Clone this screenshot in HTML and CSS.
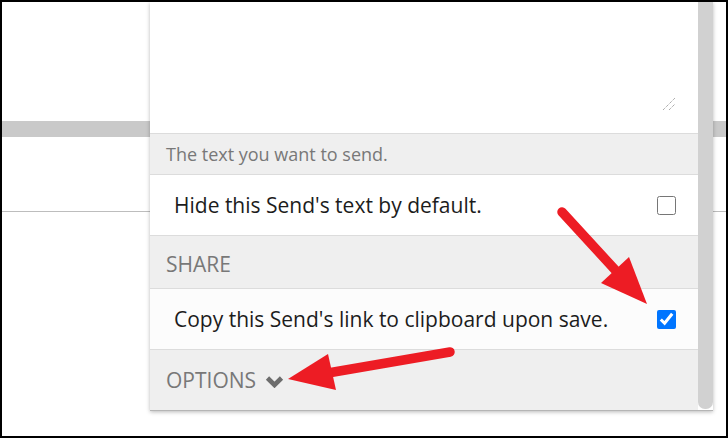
FILE: index.html
```html
<!DOCTYPE html>
<html lang="en">
<head>
<meta charset="utf-8">
<title>Send</title>
<link rel="stylesheet" href="styles.css">
</head>
<body>
<div class="frame">
  <div class="backdrop">
    <div class="bd-space-top"></div>
    <div class="bd-band"></div>
    <div class="bd-space-mid"></div>
    <div class="bd-line"></div>
  </div>

  <div class="panel">
    <div class="panel-body">
      <div class="text-area-box">
        <textarea class="text-input" aria-label="Text"></textarea>
        <svg class="resizer" width="14" height="14" viewBox="0 0 14 14" aria-hidden="true">
          <line x1="1" y1="13" x2="13" y2="1" stroke="#8a8a8a" stroke-width="1" stroke-dasharray="1 1"/>
          <line x1="7" y1="13" x2="13" y2="7" stroke="#8a8a8a" stroke-width="1" stroke-dasharray="1 1"/>
        </svg>
      </div>
      <div class="hint-row">The text you want to send.</div>
      <label class="row">
        <span class="row-label">Hide this Send's text by default.</span>
        <input class="check" type="checkbox">
      </label>
      <div class="box-header">SHARE</div>
      <label class="row row-alt">
        <span class="row-label">Copy this Send's link to clipboard upon save.</span>
        <input class="check" type="checkbox" checked>
      </label>
      <div class="options-row">
        <span>OPTIONS</span>
        <svg class="chevron" width="19" height="13" viewBox="0 0 19 13" aria-hidden="true">
          <polyline points="2.5,3 9.5,10 16.5,3" fill="none" stroke="#6d6d6d" stroke-width="4.6" stroke-linejoin="miter"/>
        </svg>
      </div>
    </div>
    <div class="scrollbar"></div>
  </div>
</div>

<svg class="arrows" width="728" height="438" viewBox="0 0 728 438" aria-hidden="true">
  <line x1="562" y1="212" x2="618" y2="273" stroke="#ed1c24" stroke-width="9.5" stroke-linecap="round"/>
  <polygon points="629,257 601,283 647,304" fill="#ed1c24"/>
  <line x1="450" y1="352" x2="328" y2="373" stroke="#ed1c24" stroke-width="9.5" stroke-linecap="round"/>
  <polygon points="328,354 336,390 288,379" fill="#ed1c24"/>
</svg>
</body>
</html>
```

FILE: styles.css
```css
* { box-sizing: border-box; }

html, body {
  margin: 0;
  padding: 0;
  background: #fff;
}

body {
  position: relative;
  width: 728px;
  height: 438px;
  overflow: hidden;
  font-family: "Open Sans", "DejaVu Sans", sans-serif;
}

.frame {
  position: relative;
  width: 728px;
  height: 438px;
  border: 2px solid #000;
  background: #fff;
  overflow: hidden;
}

.backdrop {
  display: flex;
  flex-direction: column;
}

.bd-space-top { height: 119px; }
.bd-band { height: 16px; background: #c9c9c9; }
.bd-space-mid { height: 74px; }
.bd-line { height: 1px; background: #bdbdbd; }

/* popup panel lying over the page */
.panel {
  position: absolute;
  left: 148px;
  top: 0;
  width: 563px;
  height: 409px;
  display: flex;
  background: #fff;
  border-bottom: 1px solid #b5b5b5;
  box-shadow: 0 1px 4px rgba(0, 0, 0, 0.28);
}

.panel-body {
  flex: 1;
  display: flex;
  flex-direction: column;
  min-width: 0;
}

.scrollbar {
  width: 15px;
  background: #d1d1d1;
  border-radius: 0 0 7px 7px;
  margin-bottom: 1px;
}

.text-area-box {
  position: relative;
  height: 132px;
  border-bottom: 1px solid #dcdcdc;
  background: #fff;
}

.text-input {
  display: block;
  width: 100%;
  height: 100%;
  border: none;
  outline: none;
  resize: none;
  background: transparent;
  font: inherit;
}

.resizer {
  position: absolute;
  right: 22px;
  bottom: 22px;
}

.hint-row {
  height: 41px;
  padding: 0 16px;
  display: flex;
  align-items: center;
  background: #efefef;
  border-bottom: 1px solid #dcdcdc;
  color: #787878;
  font-size: 18px;
}

.row {
  height: 61px;
  padding: 0 22px 0 24px;
  display: flex;
  align-items: center;
  justify-content: space-between;
  background: #fff;
  border-bottom: 1px solid #dcdcdc;
  color: #1c1c1c;
  font-size: 21px;
}

.row-alt { background: #fcfcfc; }

.row-label { white-space: nowrap; }

.check {
  width: 19px;
  height: 19px;
  margin: 0;
  flex: none;
}

.box-header {
  height: 53px;
  padding: 4px 16px 0;
  display: flex;
  align-items: center;
  background: #efefef;
  border-bottom: 1px solid #dcdcdc;
  color: #787878;
  font-size: 21px;
}

.options-row {
  flex: 1;
  padding: 0 16px;
  display: flex;
  align-items: center;
  gap: 9px;
  background: #efefef;
  color: #787878;
  font-size: 21px;
}

.chevron { flex: none; margin-top: 2px; }

.arrows {
  position: absolute;
  left: 0;
  top: 0;
  pointer-events: none;
}
```
